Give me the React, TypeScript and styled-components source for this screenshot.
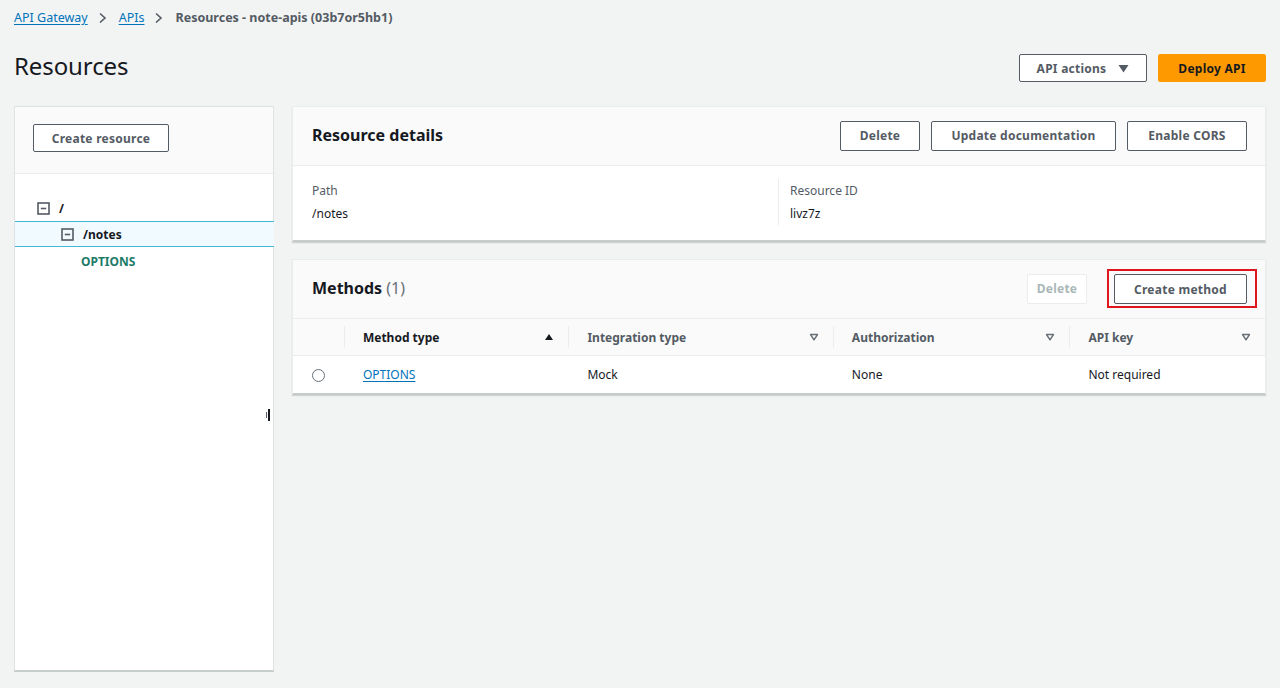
import styled, { createGlobalStyle } from 'styled-components'

const GlobalStyle = createGlobalStyle`
  html, body {
    margin: 0;
    padding: 0;
    background: #f2f3f3;
    font-family: 'Noto Sans', 'Open Sans', sans-serif;
    color: #16191f;
  }
`

const columns = [
  { label: 'Method type', width: 225, sort: 'up' },
  { label: 'Integration type', width: 265, sort: 'down' },
  { label: 'Authorization', width: 237, sort: 'down' },
  { label: 'API key', width: 196, sort: 'down' },
]

const rows = [
  { method: 'OPTIONS', integration: 'Mock', auth: 'None', key: 'Not required' },
]

const SortIcon = (props: { dir: string }) =>
  props.dir === 'up' ? (
    <svg width="10" height="8" viewBox="0 0 10 8">
      <path d="M1 7 L5 1 L9 7 Z" fill="#16191f" />
    </svg>
  ) : (
    <svg width="10" height="8" viewBox="0 0 10 8">
      <path d="M1.5 1.5 L8.5 1.5 L5 6.8 Z" fill="none" stroke="#687078" strokeWidth="1.4" strokeLinejoin="round" />
    </svg>
  )

const Collapse = () => (
  <svg width="13" height="13" viewBox="0 0 13 13">
    <rect x="1" y="1" width="11" height="11" fill="none" stroke="#545b64" strokeWidth="1.6" />
    <path d="M3.8 6.5 H9.2" stroke="#545b64" strokeWidth="1.6" />
  </svg>
)

const ChevronIcon = () => (
  <Chevron>
    <svg width="9" height="12" viewBox="0 0 9 12">
      <path d="M2 1.5 L7 6 L2 10.5" fill="none" stroke="#545b64" strokeWidth="1.6" />
    </svg>
  </Chevron>
)

const App = () => {
  return (
    <Page>
      <GlobalStyle />
      <Breadcrumbs>
        <a>API Gateway</a>
        <ChevronIcon />
        <a>APIs</a>
        <ChevronIcon />
        <span className="current">Resources - note-apis (03b7or5hb1)</span>
      </Breadcrumbs>

      <TitleBar>
        <h1>Resources</h1>
        <Actions>
          <Button $width={128} $height={28}>
            API actions
            <svg width="11" height="9" viewBox="0 0 11 9">
              <path d="M0.5 1 L10.5 1 L5.5 8.5 Z" fill="#545b64" />
            </svg>
          </Button>
          <Button $variant="primary" $width={108} $height={28}>Deploy API</Button>
        </Actions>
      </TitleBar>

      <Content>
        <Sidebar>
          <SidebarTop>
            <Button $width={136} $height={28}>Create resource</Button>
          </SidebarTop>
          <Tree>
            <TreeRow $indent={22}>
              <Collapse />
              <span>/</span>
            </TreeRow>
            <TreeRow $indent={46} $selected>
              <Collapse />
              <span>/notes</span>
            </TreeRow>
            <TreeMethod>OPTIONS</TreeMethod>
          </Tree>
          <Resizer />
        </Sidebar>

        <Main>
          <Card>
            <CardHeader>
              <h2>Resource details</h2>
              <HeaderButtons>
                <Button $width={80}>Delete</Button>
                <Button $width={185}>Update documentation</Button>
                <Button $width={120}>Enable CORS</Button>
              </HeaderButtons>
            </CardHeader>
            <Details>
              <DetailCol $width={485}>
                <label>Path</label>
                <div>/notes</div>
              </DetailCol>
              <DetailCol $divider>
                <label>Resource ID</label>
                <div>livz7z</div>
              </DetailCol>
            </Details>
          </Card>

          <Card>
            <CardHeader>
              <h2>
                Methods <span className="count">(1)</span>
              </h2>
              <HeaderButtons>
                <Button $width={60} $variant="disabled">Delete</Button>
                <Highlight>
                  <Button $width={133}>Create method</Button>
                </Highlight>
              </HeaderButtons>
            </CardHeader>
            <Table>
              <thead>
                <tr>
                  <HeadCell $width={51} />
                  {columns.map((c) => (
                    <HeadCell key={c.label} $width={c.width}>
                      <div className="inner">
                        <span>{c.label}</span>
                        <SortIcon dir={c.sort} />
                      </div>
                    </HeadCell>
                  ))}
                </tr>
              </thead>
              <tbody>
                {rows.map((r) => (
                  <tr key={r.method}>
                    <Cell>
                      <Radio />
                    </Cell>
                    <Cell>
                      <LinkText>{r.method}</LinkText>
                    </Cell>
                    <Cell>{r.integration}</Cell>
                    <Cell>{r.auth}</Cell>
                    <Cell>{r.key}</Cell>
                  </tr>
                ))}
              </tbody>
            </Table>
          </Card>
        </Main>
      </Content>
    </Page>
  )
}

const Page = styled.div`
  width: 1280px;
  height: 688px;
  box-sizing: border-box;
  padding: 0 14px;
  overflow: hidden;
`

const Breadcrumbs = styled.nav`
  display: flex;
  align-items: center;
  height: 35px;
  font-size: 12.5px;

  a {
    color: #0073bb;
    text-decoration: underline;
    text-underline-offset: 2px;
  }

  .current {
    color: #545b64;
    font-weight: 700;
  }
`

const Chevron = styled.span`
  display: inline-flex;
  margin: 0 12px 0 10px;
`

const TitleBar = styled.div`
  display: flex;
  align-items: center;
  justify-content: space-between;
  height: 64px;
  margin-bottom: 7px;

  h1 {
    margin: -4px 0 0;
    font-size: 24px;
    font-weight: 400;
    color: #16191f;
    letter-spacing: -0.1px;
  }
`

const Actions = styled.div`
  display: flex;
  gap: 11px;
  margin-top: 2px;
`

const Button = styled.button<{ $variant?: string, $width?: number, $height?: number }>`
  display: inline-flex;
  align-items: center;
  justify-content: center;
  gap: 12px;
  box-sizing: border-box;
  width: ${(p) => (p.$width ? `${p.$width}px` : 'auto')};
  height: ${(p) => p.$height || 30}px;
  padding: 0;
  font-family: inherit;
  font-size: 12px;
  font-weight: 700;
  letter-spacing: 0.25px;
  border-radius: 2px;
  cursor: pointer;
  background: ${(p) => (p.$variant === 'primary' ? '#ff9900' : '#ffffff')};
  color: ${(p) =>
    p.$variant === 'primary' ? '#16191f' : p.$variant === 'disabled' ? '#aab7b8' : '#545b64'};
  border: 1px solid
    ${(p) =>
      p.$variant === 'primary' ? '#ff9900' : p.$variant === 'disabled' ? '#eaeded' : '#545b64'};
`

const Content = styled.div`
  display: flex;
  gap: 18px;
`

const Sidebar = styled.aside`
  position: relative;
  width: 260px;
  height: 566px;
  flex-shrink: 0;
  box-sizing: border-box;
  background: #ffffff;
  border: 1px solid #dfe2e2;
  border-bottom: 2px solid #c6cbcb;
`

const SidebarTop = styled.div`
  padding: 17px 18px 21px;
  border-bottom: 1px solid #eaeded;
  background: #fafafa;
`

const Tree = styled.div`
  padding-top: 21px;
  font-size: 12px;
  font-weight: 700;
`

const TreeRow = styled.div<{ $indent: number, $selected?: boolean }>`
  display: flex;
  align-items: center;
  gap: 9px;
  height: 24px;
  padding-left: ${(p) => p.$indent}px;
  background: ${(p) => (p.$selected ? '#f1faff' : 'transparent')};
  border-top: 1px solid ${(p) => (p.$selected ? '#44b9d6' : 'transparent')};
  border-bottom: 1px solid ${(p) => (p.$selected ? '#44b9d6' : 'transparent')};
  margin-right: -1px;
  color: #16191f;
`

const TreeMethod = styled.div`
  padding: 6px 0 0 66px;
  color: #1d7b67;
`

const Resizer = styled.div`
  position: absolute;
  right: 3px;
  top: 302px;
  width: 4px;
  height: 12px;

  &::before {
    content: '';
    position: absolute;
    left: 0;
    top: 3px;
    width: 1px;
    height: 6px;
    background: #545b64;
  }

  &::after {
    content: '';
    position: absolute;
    right: 0;
    top: 0;
    width: 2px;
    height: 12px;
    background: #16191f;
  }
`

const Main = styled.div`
  display: flex;
  flex-direction: column;
  gap: 17px;
  flex: 1;
`

const Card = styled.section`
  background: #ffffff;
  border: 1px solid #eaeded;
  border-bottom: 2px solid #c6cbcb;
  box-shadow: 0 1px 1px rgba(0, 28, 36, 0.15);
`

const CardHeader = styled.div`
  display: flex;
  align-items: center;
  justify-content: space-between;
  height: 58px;
  padding: 0 18px 0 19px;
  background: #fafafa;
  border-bottom: 1px solid #eaeded;

  h2 {
    margin: -3px 0 0;
    font-size: 16px;
    font-weight: 700;
    color: #16191f;
  }

  .count {
    font-weight: 400;
    color: #687078;
  }
`

const HeaderButtons = styled.div`
  display: flex;
  align-items: center;
  gap: 11px;
  margin-top: -1px;
`

const Highlight = styled.div`
  padding: 3px 8px 2px 5px;
  border: 2px solid #e0161e;
  margin-right: -10px;
  margin-left: 9px;
`

const Details = styled.div`
  display: flex;
  padding: 13px 0 15px;
`

const DetailCol = styled.div<{ $divider?: boolean, $width?: number }>`
  flex: ${(p) => (p.$width ? `0 0 ${p.$width}px` : '1')};
  box-sizing: border-box;
  padding-left: ${(p) => (p.$divider ? '11px' : '19px')};
  border-left: ${(p) => (p.$divider ? '1px solid #eaeded' : 'none')};
  font-size: 12px;
  line-height: 23px;

  label {
    display: block;
    color: #545b64;
  }

  div {
    color: #16191f;
  }
`

const Table = styled.table`
  width: 100%;
  border-collapse: collapse;
  font-size: 12px;
`

const HeadCell = styled.th<{ $width: number }>`
  width: ${(p) => p.$width}px;
  height: 36px;
  padding: 0;
  background: #fafafa;
  border-bottom: 1px solid #eaeded;
  text-align: left;
  font-weight: 700;
  color: #545b64;

  &:nth-child(2) {
    color: #16191f;
  }

  .inner {
    display: flex;
    align-items: center;
    justify-content: space-between;
    height: 22px;
    padding: 0 14px 0 18px;
    border-left: 1px solid #eaeded;
  }
`

const Cell = styled.td`
  height: 37px;
  padding: 0 0 0 19px;
  color: #16191f;

  &:first-child {
    padding-left: 19px;
  }
`

const Radio = styled.span`
  display: inline-block;
  width: 11px;
  height: 11px;
  border: 1px solid #687078;
  border-radius: 50%;
  vertical-align: middle;
`

const LinkText = styled.a`
  color: #0073bb;
  text-decoration: underline;
  text-underline-offset: 2px;
`

export default App
